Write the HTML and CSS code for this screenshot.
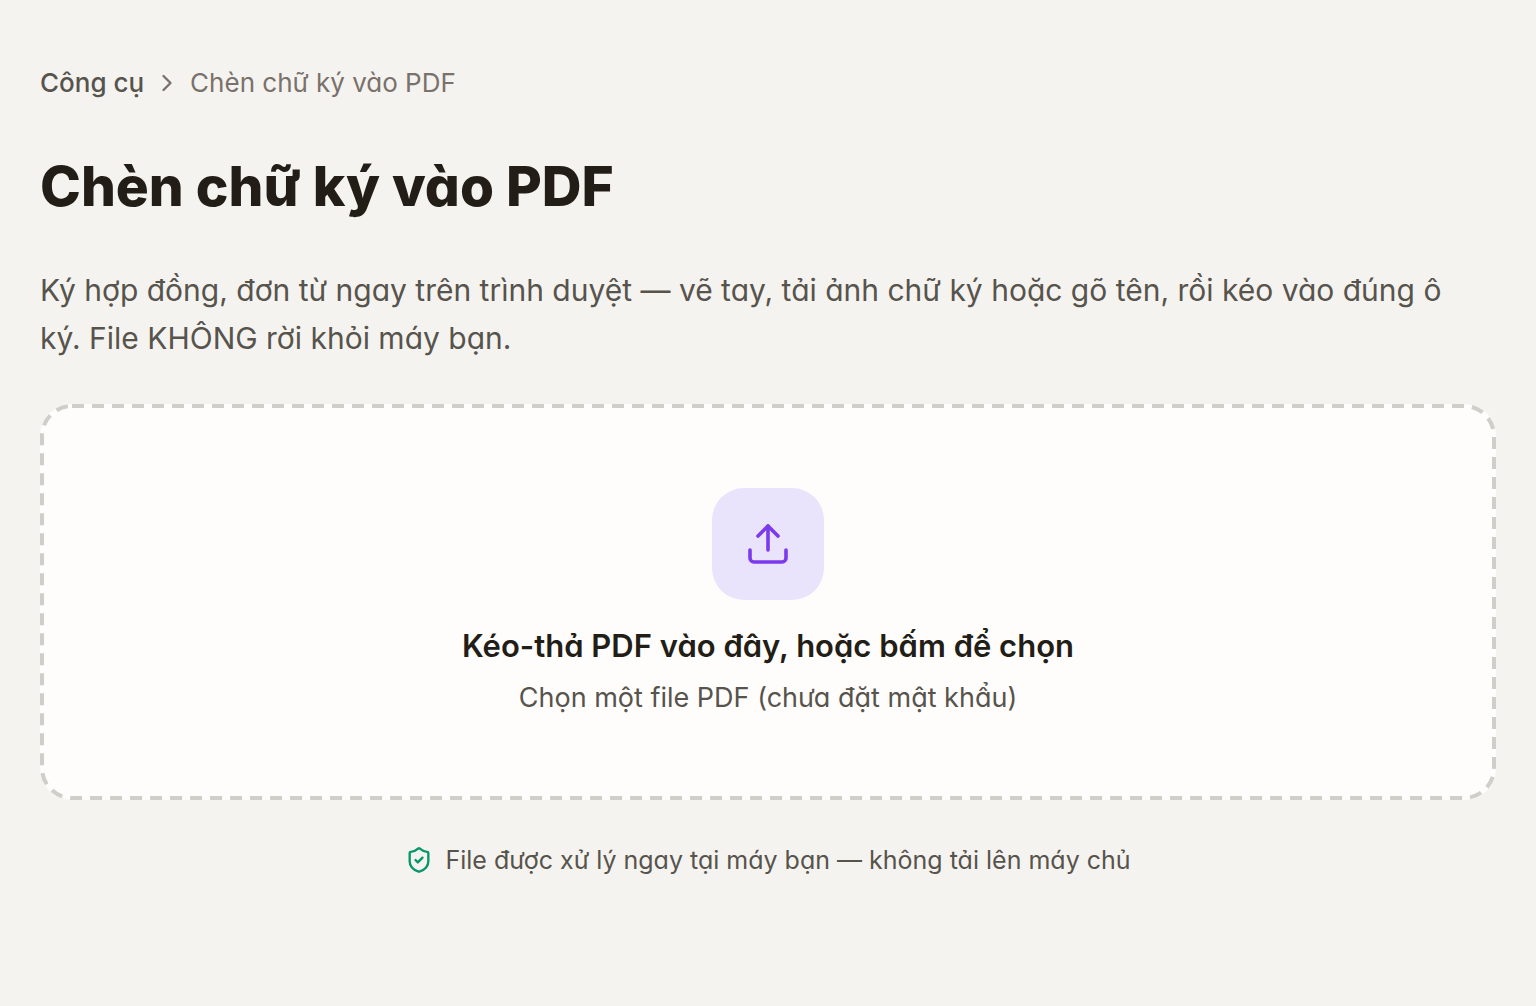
FILE: index.html
```html
<!DOCTYPE html>
<html lang="vi">
<head>
    <meta charset="UTF-8">
    <meta name="viewport" content="width=device-width, initial-scale=1.0">
    <title>Chèn chữ ký vào PDF</title>
    <link rel="stylesheet" href="styles.css">
</head>
<body>

    <main class="page">
        <nav class="breadcrumb" aria-label="Breadcrumb">
            <a href="#">Công cụ</a>
            <svg class="chevron" viewBox="0 0 24 24" aria-hidden="true"><path d="m9 18 6-6-6-6"/></svg>
            <span>Chèn chữ ký vào PDF</span>
        </nav>

        <h1>Chèn chữ ký vào PDF</h1>

        <p class="intro">Ký hợp đồng, đơn từ ngay trên trình duyệt — vẽ tay, tải ảnh chữ ký hoặc gõ tên, rồi kéo vào đúng ô ký. File KHÔNG rời khỏi máy bạn.</p>

        <button type="button" class="dropzone">
            <!-- dashed outline -->
            <svg class="outline" aria-hidden="true"><rect x="2" y="2" rx="30"/></svg>
            <span class="upload-icon">
                <svg viewBox="0 0 24 24" aria-hidden="true">
                    <path d="M12 15V3"/>
                    <path d="m7 8 5-5 5 5"/>
                    <path d="M21 15v4a2 2 0 0 1-2 2H5a2 2 0 0 1-2-2v-4"/>
                </svg>
            </span>
            <span class="dropzone-title">Kéo-thả PDF vào đây, hoặc bấm để chọn</span>
            <span class="dropzone-hint">Chọn một file PDF (chưa đặt mật khẩu)</span>
        </button>

        <p class="privacy">
            <svg class="shield" viewBox="0 0 24 24" aria-hidden="true">
                <path d="M20 13c0 5-3.500 7.500-7.660 8.950a1 1 0 0 1-.67-.01C7.500 20.500 4 18 4 13V6a1 1 0 0 1 1-1c2 0 4.500-1.200 6.240-2.720a1.170 1.170 0 0 1 1.520 0C14.510 3.810 17 5 19 5a1 1 0 0 1 1 1z"/>
                <path d="m9 12 2 2 4-4"/>
            </svg>
            <span>File được xử lý ngay tại máy bạn — không tải lên máy chủ</span>
        </p>
    </main>

</body>
</html>
```
FILE: styles.css
```css
* {
    box-sizing: border-box;
}
body {
    margin: 0;
    background-color: #f5f3ef;
    color: #231d17;
    font-family: Inter, "Open Sans", sans-serif;
    /* single-storey a */
    font-feature-settings: "cv11";
}
svg {
    fill: none;
    stroke: currentColor;
    stroke-width: 2;
    stroke-linecap: round;
    stroke-linejoin: round;
    flex-shrink: 0;
}
.page {
    padding: 64px 40px;
}
.breadcrumb {
    display: flex;
    align-items: center;
    gap: 9px;
    font-size: 26px;
    line-height: 38px;
    color: #79716b;
}
.breadcrumb a {
    color: #57534d;
    font-weight: 500;
    text-decoration: none;
}
.breadcrumb a:hover {
    color: #7c3aed;
}
.chevron {
    width: 28px;
    height: 28px;
}
h1 {
    margin: 42px 0 38px;
    font-size: 55px;
    line-height: 84px;
    font-weight: 800;
}
.intro {
    margin: 0 0 42px;
    padding-right: 16px;
    font-size: 30px;
    line-height: 48px;
    color: #57534d;
}
.dropzone {
    position: relative;
    display: flex;
    flex-direction: column;
    align-items: center;
    width: 100%;
    padding: 84px 40px 82px;
    border: none;
    border-radius: 32px;
    background-color: #fffdfb;
    font-family: inherit;
    font-feature-settings: inherit;
    cursor: pointer;
}
.outline {
    position: absolute;
    top: 0;
    left: 0;
    width: 100%;
    height: 100%;
    color: #d0cec9;
    stroke-width: 4;
    stroke-linecap: butt;
    stroke-dasharray: 12 8;
}
.outline rect {
    width: calc(100% - 4px);
    height: calc(100% - 4px);
}
.dropzone:hover .outline {
    color: #7c3aed;
}
.upload-icon {
    display: flex;
    align-items: center;
    justify-content: center;
    width: 112px;
    height: 112px;
    margin-bottom: 22px;
    border-radius: 32px;
    background-color: #e9e3fb;
    color: #7c3aed;
}
.upload-icon svg {
    width: 48px;
    height: 48px;
    stroke-width: 1.8;
}
.dropzone-title {
    font-size: 31px;
    line-height: 48px;
    font-weight: 600;
    color: #231d17;
}
.dropzone-hint {
    margin-top: 8px;
    font-size: 27px;
    line-height: 40px;
    color: #57534d;
}
.privacy {
    display: flex;
    align-items: center;
    justify-content: center;
    gap: 12px;
    margin: 40px 0 0;
    font-size: 25px;
    line-height: 40px;
    color: #57534d;
}
.shield {
    width: 28px;
    height: 28px;
    color: #059669;
}
```
